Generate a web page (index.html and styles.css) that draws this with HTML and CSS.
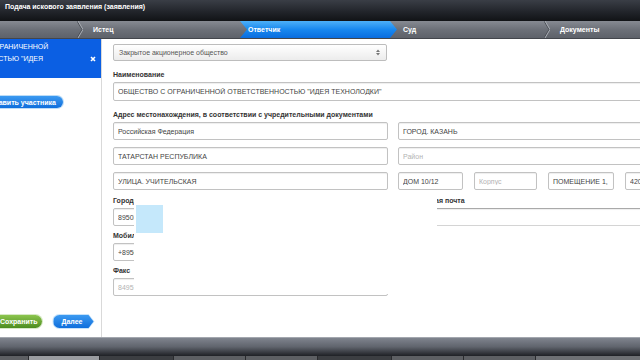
FILE: index.html
```html
<!DOCTYPE html>
<html lang="ru">
<head>
    <meta charset="UTF-8">
    <meta name="viewport" content="width=device-width, initial-scale=1.0">
    <title>Подача искового заявления (заявления)</title>
    <link rel="stylesheet" href="styles.css">
</head>
<body>
    <div class="app">
        <header class="titlebar">Подача искового заявления (заявления)</header>

        <!-- Шаги мастера -->
        <nav class="steps">
            <div class="step step-lead"></div>
            <svg class="sep" viewBox="0 0 6 17"><polyline points="0,0 5,8.5 0,17" fill="none" stroke="#4b4f56" stroke-width="1"/><polyline points="1,0 6,8.5 1,17" fill="none" stroke="#a9adb4" stroke-width="1"/></svg>
            <div class="step step-plaintiff">Истец</div>
            <div class="step step-active">Ответчик</div>
            <div class="step step-court">Суд</div>
            <svg class="sep" viewBox="0 0 6 17"><polyline points="0,0 5,8.5 0,17" fill="none" stroke="#4b4f56" stroke-width="1"/><polyline points="1,0 6,8.5 1,17" fill="none" stroke="#a9adb4" stroke-width="1"/></svg>
            <div class="step step-docs">Документы</div>
        </nav>

        <div class="workspace">
            <aside class="sidebar">
                <div class="sidebar-inner">
                    <div class="party">
                        <div class="party-name">ОБЩЕСТВО С ОГРАНИЧЕННОЙ<br>ОТВЕТСТВЕННОСТЬЮ "ИДЕЯ</div>
                        <svg class="party-close" viewBox="0 0 6 6"><path d="M1 1 L5 5 M5 1 L1 5" stroke="#fff" stroke-width="1.6"/></svg>
                    </div>
                    <button class="btn btn-add">Добавить участника</button>
                    <div class="sidebar-actions">
                        <button class="btn btn-save">Сохранить</button>
                        <span class="btn-next-wrap"><span class="btn-next">Далее</span></span>
                    </div>
                </div>
            </aside>

            <main class="form">
                <div class="form-body">
                    <div class="select-box">
                        <span>Закрытое акционерное общество</span>
                        <svg class="updown" viewBox="0 0 4 7"><path d="M0 3 L2 0.5 L4 3 Z M0 4 L2 6.5 L4 4 Z" fill="#777"/></svg>
                    </div>

                    <div class="label">Наименование</div>
                    <input class="field" type="text" value='ОБЩЕСТВО С ОГРАНИЧЕННОЙ ОТВЕТСТВЕННОСТЬЮ "ИДЕЯ ТЕХНОЛОДКИ"'>

                    <div class="label">Адрес местонахождения, в соответствии с учредительными документами</div>
                    <div class="address">
                        <input class="field" type="text" value="Российская Федерация">
                        <input class="field" type="text" value="ГОРОД. КАЗАНЬ">
                        <input class="field" type="text" value="ТАТАРСТАН РЕСПУБЛИКА">
                        <input class="field" type="text" placeholder="Район">
                        <input class="field" type="text" value="УЛИЦА. УЧИТЕЛЬСКАЯ">
                        <div class="house">
                            <input class="field house-no" type="text" value="ДОМ 10/12">
                            <input class="field house-block" type="text" placeholder="Корпус">
                            <input class="field house-room" type="text" value="ПОМЕЩЕНИЕ 1,">
                            <input class="field house-zip" type="text" value="420021">
                        </div>
                    </div>

                    <div class="contacts">
                        <div class="contacts-col">
                            <div class="label label-tight">Городской телефон</div>
                            <input class="field" type="text" value="89503141592">
                            <div class="label label-tight">Мобильный телефон</div>
                            <input class="field" type="text" value="+89503141592">
                            <div class="label label-tight">Факс</div>
                            <input class="field" type="text" placeholder="84951234567">
                        </div>
                        <div class="contacts-col">
                            <div class="label label-tight">Электронная почта</div>
                            <input class="field field-mail" type="text">
                        </div>
                    </div>
                </div>
            </main>

            <!-- всплывающее окно поверх формы -->
            <div class="popup">
                <div class="popup-swatch"></div>
            </div>
        </div>

        <footer class="taskbar">
            <div class="tabs">
                <span class="tab"></span>
                <span class="tab tab-light"></span>
                <span class="tab tab-dark"></span>
                <span class="tab"></span>
                <span class="tab"></span>
                <span class="tab tab-dark"></span>
                <span class="tab"></span>
                <span class="tab"></span>
                <span class="tab tab-wide"></span>
            </div>
        </footer>
    </div>
</body>
</html>
```

FILE: styles.css
```css
* {
    box-sizing: border-box;
}

body {
    margin: 0;
    font-family: "Liberation Sans", Arial, sans-serif;
    font-size: 7px;
    color: #333;
    background: #fff;
}

.app {
    width: 640px;
    height: 360px;
    display: flex;
    flex-direction: column;
    overflow: hidden;
}

.titlebar {
    height: 21px;
    flex: none;
    padding: 0 5px;
    line-height: 14px;
    color: #fff;
    font-weight: bold;
    background: linear-gradient(#3a3e46, #22252b 55%, #111316);
}

/* шаги */
.steps {
    height: 18px;
    flex: none;
    display: flex;
    color: #fff;
    font-weight: bold;
    background: linear-gradient(#868a92, #6c7078 50%, #5e626a);
    border-bottom: 1px solid #43464c;
}

.step {
    line-height: 17px;
    padding-left: 10px;
    white-space: nowrap;
    flex: none;
}

.step-lead {
    width: 77px;
    padding: 0;
}

.sep {
    width: 6px;
    height: 17px;
    flex: none;
}

.step-plaintiff {
    width: 157px;
}

.step-active {
    width: 157px;
    padding-left: 8px;
    background: linear-gradient(#4db0f8, #1888ef 50%, #0a6ddf);
    clip-path: polygon(0 0, calc(100% - 7px) 0, 100% 50%, calc(100% - 7px) 100%, 0 100%, 7px 50%);
}

.step-court {
    width: 147px;
    padding-left: 6px;
}

.step-docs {
    flex: 1;
}

/* рабочая область */
.workspace {
    flex: 1;
    min-height: 0;
    display: flex;
    position: relative;
}

.sidebar {
    width: 102px;
    flex: none;
    overflow: hidden;
    border-right: 1px solid #d9d9d9;
    background: #fff;
}

.sidebar-inner {
    margin-left: -62px;
    width: 164px;
    height: 100%;
    display: flex;
    flex-direction: column;
}

.party {
    height: 39px;
    flex: none;
    display: flex;
    padding: 2px 6px 0 3px;
    color: #fff;
    background: #0b5fe3;
}

.party-name {
    flex: 1;
    line-height: 12px;
    white-space: nowrap;
}

.party-close {
    width: 6px;
    height: 6px;
    align-self: center;
    margin-top: -2px;
}

.btn {
    font: bold 7px "Liberation Sans", Arial, sans-serif;
    color: #fff;
    border: none;
    padding: 0;
    white-space: nowrap;
}

.btn-add {
    align-self: flex-start;
    margin: 18px 0 0 40px;
    height: 12px;
    padding: 0 7px;
    border-radius: 6px;
    background: linear-gradient(#3c9af1, #0f6edc);
    box-shadow: 0 0 0 1px #bcdcf7;
}

.sidebar-actions {
    margin-top: auto;
    padding: 0 0 8px 56px;
    display: flex;
    align-items: center;
    gap: 10px;
}

.btn-save {
    height: 13px;
    padding: 0 5px 0 6px;
    border-radius: 7px;
    background: linear-gradient(#8cc54e, #4c8c20);
    box-shadow: 0 0 0 1px #d7e9c6;
}

.btn-next-wrap {
    display: block;
    padding: 1px;
    background: #c6e2fa;
    border-radius: 8px 0 0 8px;
    clip-path: polygon(0 0, calc(100% - 6px) 0, 100% 50%, calc(100% - 6px) 100%, 0 100%);
}

.btn-next {
    display: block;
    height: 13px;
    line-height: 13px;
    padding: 0 11px 0 8px;
    color: #fff;
    font-weight: bold;
    border-radius: 7px 0 0 7px;
    background: linear-gradient(#3c9af1, #0f6edc);
    clip-path: polygon(0 0, calc(100% - 5px) 0, 100% 50%, calc(100% - 5px) 100%, 0 100%);
}

/* форма */
.form {
    flex: 1;
    min-width: 0;
    overflow: hidden;
    padding: 5px 0 0 11px;
}

.form-body {
    width: 560px;
}

.select-box {
    width: 274px;
    height: 17px;
    display: flex;
    align-items: center;
    justify-content: space-between;
    padding: 0 6px 0 5px;
    color: #555;
    border: 1px solid #bdbdbd;
    border-radius: 2px;
    background: linear-gradient(#fff, #ececec);
}

.updown {
    width: 4px;
    height: 7px;
}

.label {
    font-weight: bold;
    color: #333;
    line-height: 10px;
    margin: 9px 0 2px;
    white-space: nowrap;
}

.label-tight {
    margin-top: 5px;
}

.field {
    display: block;
    width: 100%;
    height: 18px;
    margin: 0;
    padding: 0 4px;
    font: 7px "Liberation Sans", Arial, sans-serif;
    color: #444;
    background: #fff;
    border: 1px solid #c2c2c2;
    border-radius: 2px;
    box-shadow: inset 0 1px 1px rgba(0, 0, 0, 0.07);
    outline: none;
}

.form-body > .field {
    height: 19px;
}

.field::placeholder {
    color: #b3b3b3;
}

.address {
    display: grid;
    grid-template-columns: 275px 275px;
    column-gap: 10px;
    row-gap: 7px;
}

.house {
    display: flex;
    gap: 11px;
}

.house .field {
    flex: none;
}

.house-no {
    width: 65px !important;
}

.house-block {
    width: 63px !important;
}

.house-room {
    width: 66px !important;
}

.house-zip {
    width: 50px !important;
}

.contacts {
    display: grid;
    grid-template-columns: 275px 275px;
    column-gap: 10px;
    margin-top: 1px;
}

.field-mail {
    margin-top: 1px;
    border-color: #a9a9a9 #c2c2c2 #d4d4d4;
}

/* всплывающее окно */
.popup {
    position: absolute;
    left: 134px;
    top: 155px;
    width: 303px;
    height: 100px;
    padding: 11px 0 0 2px;
    background: #fff;
}

.popup-swatch {
    width: 27px;
    height: 28px;
    background: #c5e8fb;
}

/* нижняя панель */
.taskbar {
    height: 23px;
    flex: none;
    display: flex;
    flex-direction: column;
    border-top: 1px solid #a3a7ae;
    background: linear-gradient(#7f848e, #60646d 40%, #24262b 78%, #0c0d0f);
}

.tabs {
    margin-top: auto;
    height: 4px;
    display: flex;
}

.tab {
    width: 72px;
    background: #5d5f63;
    border-left: 1px solid #2a2b2e;
}

.tab:first-child {
    width: 28px;
    border-left: none;
}

.tab-light {
    width: 71px;
    background: #9a9ca0;
}

.tab-dark {
    width: 74px;
    background: #3c3e42;
}

.tab-wide {
    flex: 1;
    background: #6e7074;
}
```
